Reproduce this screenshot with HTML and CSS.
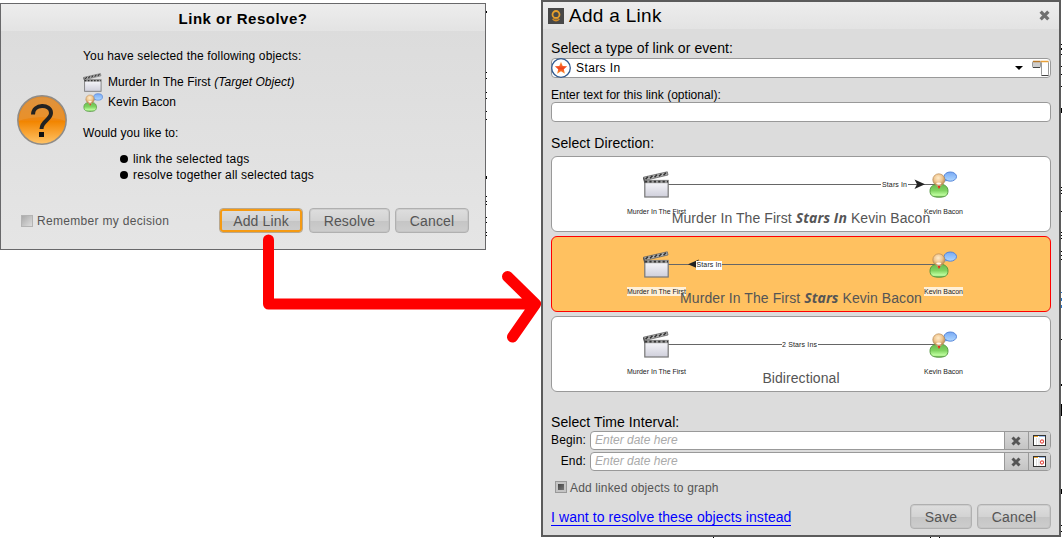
FILE: index.html
```html
<!DOCTYPE html>
<html lang="en">
<head>
<meta charset="utf-8">
<title>Link or Resolve</title>
<link rel="stylesheet" href="styles.css">
</head>
<body>
<svg class="defs" width="0" height="0" aria-hidden="true">
  <defs>
    <linearGradient id="gPaper" x1="0" y1="0" x2="0" y2="1"><stop offset="0" stop-color="#fafafd"/><stop offset="1" stop-color="#cfcfdb"/></linearGradient>
    <radialGradient id="gHead" cx=".45" cy=".35" r=".7"><stop offset="0" stop-color="#ffecca"/><stop offset=".5" stop-color="#f0c690"/><stop offset="1" stop-color="#ad7c40"/></radialGradient>
    <linearGradient id="gBody" x1="0" y1="0" x2="0" y2="1"><stop offset="0" stop-color="#6cb850"/><stop offset=".5" stop-color="#80d460"/><stop offset=".85" stop-color="#c0ffa0"/><stop offset="1" stop-color="#5ea845"/></linearGradient>
    <linearGradient id="gTalk" x1="0" y1="0" x2="0" y2="1"><stop offset="0" stop-color="#78a9f4"/><stop offset="1" stop-color="#b0d8ff"/></linearGradient>
    <linearGradient id="gStar" x1="0" y1="0" x2="0" y2="1"><stop offset="0" stop-color="#ffa040"/><stop offset=".55" stop-color="#f0401c"/><stop offset="1" stop-color="#ff9a30"/></linearGradient>
    <linearGradient id="gQ" x1="0" y1="0" x2="0" y2="1"><stop offset="0" stop-color="#d98a35"/><stop offset=".5" stop-color="#ee860f"/><stop offset=".53" stop-color="#f28500"/><stop offset="1" stop-color="#ffc468"/></linearGradient>
    <symbol id="clapper" viewBox="0 0 26 27">
      <path d="M0.5 6.2 24.3.8 25 4 1.3 9.6Z" fill="#b4b4b4" stroke="#666" stroke-width=".8"/>
      <path d="M2.5 8.2 5 5.7M7 7.2 9.5 4.7M11.5 6.2 14 3.7M16 5.2 18.5 2.7M20.5 4.2 23 1.7" stroke="#333" stroke-width="1.5"/>
      <rect x="1.8" y="9.5" width="23.4" height="16.5" fill="url(#gPaper)" stroke="#777" stroke-width="1.2"/>
      <path d="M1.5 10.8H25.5" stroke="#999" stroke-width="2.8"/>
      <path d="M2 10.7H25" stroke="#333" stroke-width="1.8" stroke-dasharray="2.2 2.2"/>
      <path d="M0.5 6.5 2 12" stroke="#555" stroke-width="1.3"/>
    </symbol>
    <symbol id="person" viewBox="0 0 28 27">
      <path d="M1 20C1 15 5 13 10 13S19 15 19 20C19 25 15.500 26.200 10 26.200S1 25 1 20Z" fill="url(#gBody)" stroke="#4f943b" stroke-width=".9"/>
      <path d="M7 13.500 9.800 17 13 13.500Z" fill="#fff"/><path d="M8.300 14.900H11.700L10 18Z" fill="#e02414"/>
      <path d="M16.500 7 14.800 10.800 20 9.600Z" fill="#6d9fe8"/>
      <ellipse cx="21.300" cy="5.600" rx="6.200" ry="4.600" fill="url(#gTalk)" stroke="#5585d8"/>
      <circle cx="9.800" cy="8.800" r="6" fill="url(#gHead)" stroke="#b98d58" stroke-width=".7"/>
      <ellipse cx="9.800" cy="12.600" rx="2.600" ry="1.100" fill="#fff8ee"/>
    </symbol>
    <symbol id="cross" viewBox="0 0 10 10"><path d="M1.500 1.500 8.500 8.500M8.500 1.500 1.500 8.500" stroke="currentColor" stroke-width="3"/></symbol>
    <symbol id="calendar" viewBox="0 0 13 11">
      <rect x=".5" y=".5" width="12" height="10" fill="#fff" stroke="#333"/>
      <path d="M1 1.500H5" stroke="#f1a52b"/><path d="M6 1.500H12" stroke="#9dbbe8"/>
      <path d="M3.500 3V10M6 3V10" stroke="#ddd"/>
      <circle cx="9" cy="6.500" r="1.600" fill="none" stroke="#e55048" stroke-width="1.100"/>
    </symbol>
  </defs>
</svg>

<svg class="layer" width="1062" height="538" shape-rendering="crispEdges" aria-hidden="true">
  <path d="M486.500 11v2M486.500 72v1M486.500 78v1M486.500 92v1M486.500 98v1M486.500 111v1M486.500 119v1M486.500 176v3M486.500 196v1M486.500 201v1M486.500 204v1M486.500 217v1M486.500 222v1M486.500 232v1M486.500 235v1" stroke="#000"/>
  <path d="M1061.500 44v1M1061.500 48v2M1061.500 54v1M1061.500 66v1M1061.500 74v1M1061.500 86v1M1061.500 108v5M1061.500 187v1M1061.500 190v1M1061.500 193v1M1061.500 211v1M1061.500 232v1M1061.500 235v1M1061.500 238v1M1061.500 251v1M1061.500 255v1M1061.500 259v1M1061.500 339v1M1061.500 384v2M1061.500 404v12M1061.500 489v5M1061.500 525v1M1061.500 531v1M713.500 537v1M930.500 537v1M939.500 537v1" stroke="#000"/>
  <path d="M1061.500 292v1M1061.500 298v3M1061.500 305v3" stroke="#2a73c4"/>
</svg>

<section class="window ask">
  <header class="ask-title"><span class="t-ask">Link or Resolve?</span></header>
  <div class="ask-body">
    <svg class="question" width="50" height="50" viewBox="0 0 50 50">
      <circle cx="25" cy="25" r="24.200" fill="url(#gQ)" stroke="#8f8c88" stroke-width="1.500"/>
      <path d="M2 26C14 21 36 21 48 26 47 10 37 2.500 25 2.500S3 10 2 26Z" fill="#e4a050" opacity=".4"/>
      <path d="M16 19.500C16 8.500 34 8.500 34 18 34 25 24.500 25.500 24.500 34" fill="none" stroke="#222" stroke-width="4"/>
      <rect x="22" y="37" width="5" height="5" fill="#111"/>
    </svg>
    <div class="ask-text">
      <p class="line t-you">You have selected the following objects:</p>
      <div class="objects">
        <div class="object"><svg width="19" height="19"><use href="#clapper"/></svg><span class="t-murder">Murder In The First <i>(Target Object)</i></span></div>
        <div class="object"><svg width="20" height="19"><use href="#person"/></svg><span class="t-kevin">Kevin Bacon</span></div>
      </div>
      <p class="line t-would">Would you like to:</p>
      <ul class="choices">
        <li><span class="t-link">link the selected tags</span></li>
        <li><span class="t-resolve">resolve together all selected tags</span></li>
      </ul>
    </div>
  </div>
  <footer class="ask-foot">
    <span class="check"></span><span class="t-remember">Remember my decision</span>
    <div class="buttons">
      <button class="btn btn-add"><span class="t-btn">Add Link</span></button>
      <button class="btn btn-resolve"><span class="t-btn">Resolve</span></button>
      <button class="btn btn-cancel"><span class="t-btn">Cancel</span></button>
    </div>
  </footer>
</section>

<svg class="layer" width="1062" height="538" aria-hidden="true">
  <path d="M268.500 240V304H535M507.500 276.500 535.500 304 512.500 337" fill="none" stroke="#f00" stroke-width="11" stroke-linecap="round" stroke-linejoin="round"/>
</svg>

<section class="window link">
  <header class="link-title">
    <svg width="16" height="16" viewBox="0 0 16 16"><rect width="16" height="16" fill="#484848"/><circle cx="8" cy="6.500" r="3.500" fill="none" stroke="#e8a02c" stroke-width="1.800"/><path d="M4.500 11Q8 14.500 11.500 11M5.500 10Q8 12 10.500 10" fill="none" stroke="#d08b28" stroke-width="1.200"/></svg>
    <span class="t-add">Add a Link</span>
    <svg class="close" width="11" height="11"><use href="#cross"/></svg>
  </header>
  <div class="link-body">
    <label class="big-label t-type">Select a type of link or event:</label>
    <div class="select">
      <svg width="20" height="20" viewBox="0 0 20 20"><circle cx="10" cy="10" r="9.300" fill="#fff" stroke="#315a90" stroke-width="1.300"/><path d="M10 3.800 11.700 8 16.200 8.300 12.800 11.200 13.900 15.700 10 13.200 6.100 15.700 7.200 11.200 3.800 8.300 8.300 8Z" fill="url(#gStar)"/></svg>
      <span class="t-stars">Stars In</span>
      <svg class="caret" width="8" height="4"><path d="M0 0H8L4 4Z" fill="#000"/></svg>
      <svg class="tree" width="18" height="17" viewBox="0 0 18 17"><rect x=".5" y="1.500" width="8" height="6" rx="1" fill="#ccc" stroke="#999"/><rect x="9.500" y="1.500" width="7" height="14" rx="1" fill="#fff" stroke="#999"/><path d="M1 1.500H8.500" stroke="#b87828" stroke-width="1.500"/><path d="M9 1.500H16.500" stroke="#e8a038" stroke-width="1.500"/><path d="M1 7.500H8M9.500 15.500H16.500" stroke="#444"/></svg>
    </div>
    <label class="small-label t-enter">Enter text for this link (optional):</label>
    <div class="text-input"></div>
    <label class="big-label direction t-dir">Select Direction:</label>
    <div class="cards">
      <div class="card">
        <svg class="diagram" width="498" height="74" viewBox="1 1 498 74">
          <path d="M117 28.500H330M357 28.500H386" stroke="#666"/>
          <use href="#clapper" x="92" y="15" width="26" height="27"/><use href="#person" x="378" y="15" width="28" height="27"/>
          <path d="M363.500 23.500 374 28.300 363.500 33 366 28.300Z" fill="#222"/>
          <text x="331" y="31" textLength="25">Stars In</text>
          <text x="76" y="58" textLength="59">Murder In The First</text><text x="373" y="58" textLength="39">Kevin Bacon</text>
        </svg>
        <p class="caption t-cap1">Murder In The First <b>Stars In</b> Kevin Bacon</p>
      </div>
      <div class="card active">
        <svg class="diagram" width="498" height="74" viewBox="1 1 498 74">
          <path d="M117 28.500H386" stroke="#666"/>
          <use href="#clapper" x="92" y="15" width="26" height="27"/><use href="#person" x="378" y="15" width="28" height="27"/>
          <path d="M148 23.500 137 28.300 148 33 145.500 28.300Z" fill="#222"/>
          <rect x="145" y="25" width="26" height="9" fill="#fff"/><text x="145.500" y="31" textLength="25">Stars In</text>
          <path d="M76 51h59v9H76zM373 51h39v9h-39z" fill="#fff0d8"/>
          <text x="76" y="58" textLength="59">Murder In The First</text><text x="373" y="58" textLength="39">Kevin Bacon</text>
        </svg>
        <p class="caption t-cap2">Murder In The First <b>Stars</b> Kevin Bacon</p>
      </div>
      <div class="card">
        <svg class="diagram" width="498" height="74" viewBox="1 1 498 74">
          <path d="M117 28.500H231M267 28.500H386" stroke="#666"/>
          <use href="#clapper" x="92" y="15" width="26" height="27"/><use href="#person" x="378" y="15" width="28" height="27"/>
          <text x="231" y="31" textLength="35">2 Stars Ins</text>
          <text x="76" y="58" textLength="59">Murder In The First</text><text x="373" y="58" textLength="39">Kevin Bacon</text>
        </svg>
        <p class="caption t-cap3">Bidirectional</p>
      </div>
    </div>
    <label class="big-label interval t-int">Select Time Interval:</label>
    <div class="date-row"><label class="t-date">Begin:</label><div class="date"><span class="placeholder">Enter date here</span><span class="cell"><svg width="10" height="10"><use href="#cross"/></svg></span><span class="cell"><svg width="13" height="11"><use href="#calendar"/></svg></span></div></div>
    <div class="date-row"><label class="t-date">End:</label><div class="date"><span class="placeholder">Enter date here</span><span class="cell"><svg width="10" height="10"><use href="#cross"/></svg></span><span class="cell"><svg width="13" height="11"><use href="#calendar"/></svg></span></div></div>
    <div class="graph-row"><span class="check on"></span><span class="t-graph">Add linked objects to graph</span></div>
    <footer class="link-foot">
      <a class="t-want">I want to resolve these objects instead</a>
      <div class="buttons">
        <button class="btn btn-save"><span class="t-btn">Save</span></button>
        <button class="btn btn-cancel"><span class="t-btn">Cancel</span></button>
      </div>
    </footer>
  </div>
</section>
</body>
</html>
```
FILE: styles.css
```css
* { box-sizing: border-box; }
body { margin: 0; width: 1062px; height: 538px; position: relative; overflow: hidden; background: #fff; font: 12px/16px "Liberation Sans", Arial, sans-serif; color: #000; }
p, ul { margin: 0; padding: 0; }
span, label, a, p { white-space: nowrap; }
svg { display: block; flex: none; }
.defs { position: absolute; }
.layer { position: absolute; left: 0; top: 0; }
.window { position: absolute; display: flex; flex-direction: column; }

.ask { left: 0; top: 3px; width: 486px; height: 247px; border: 1px solid #68686a; background: linear-gradient(#dbdbdb, #e5e5e5); }
.ask-title { height: 27px; background: linear-gradient(#ededed, #e3e3e3); display: flex; justify-content: center; align-items: center; font-weight: bold; font-size: 15px; letter-spacing: .5px; padding-top: 2px; }
.ask-body { display: flex; padding: 17px 0 0 16px; height: 173px; }
.question { margin-top: 47px; }
.ask-text { margin-left: 16px; }
.objects { padding: 8px 0 13px; }
.object { height: 20px; display: grid; grid-template-columns: 25px auto; align-items: center; }
.choices { list-style: none; padding: 10px 0 0 37px; }
.choices li { display: flex; align-items: center; gap: 5px; height: 16px; }
.choices li::before { content: ""; width: 8px; height: 8px; border-radius: 50%; background: #000; }
.t-you { letter-spacing: .15px; }
.t-murder, .t-kevin, .t-would { letter-spacing: .05px; }
.t-link { letter-spacing: .2px; }
.t-resolve { letter-spacing: .16px; }
.t-remember { letter-spacing: .31px; }
.ask-foot { display: flex; align-items: center; height: 25px; padding: 0 16px 0 20px; margin-top: 4px; color: #555; }
.check { width: 12px; height: 12px; margin-right: 4px; border: 1px solid #b4b4b4; background: linear-gradient(135deg, #aaa, #ddd); }
.check.on { border: 1px solid #999; background: linear-gradient(135deg, #444, #777) center / 6px 6px no-repeat, #c4c4c4; }
.buttons { display: flex; gap: 5px; margin-left: auto; }
.btn { height: 25px; padding: 1px 0 0; border: 1px solid #b0b0b0; border-radius: 4px; background: linear-gradient(#dedede, #d3d3d3 50%, #c5c5c5 52%, #cdcdcd); color: #555; font: 14px/20px "Liberation Sans", Arial, sans-serif; letter-spacing: .15px; box-shadow: inset 0 0 0 1px rgba(190,190,190,.5); }
.btn-add { width: 84px; margin-right: 1px; border-color: #b8a890; box-shadow: inset 0 0 0 2px #f59a13; }
.btn-resolve { width: 81px; }
.btn-cancel { width: 74px; }
.btn-save { width: 62px; }

.link { left: 541px; top: 0; width: 520px; height: 537px; border: 2px solid #5b5b5b; background: #dcdcdc; }
.link-title { height: 27px; background: linear-gradient(#ededed, #e3e3e3); display: flex; align-items: center; padding: 0 9px 0 5px; }
.link-title .t-add { margin-left: 5px; font-size: 19px; letter-spacing: .3px; line-height: 26px; }
.close { margin-left: auto; color: #707070; }
.link-body { padding: 10px 8px 0; display: flex; flex-direction: column; }
.big-label { font-size: 14px; letter-spacing: .07px; line-height: 19px; height: 19px; }
.small-label { margin-top: 8px; height: 16px; line-height: 18px; letter-spacing: .03px; }
.select { height: 20px; border: 1px solid #999; border-radius: 4px; background: #fff; display: flex; align-items: center; }
.select > svg:first-child { margin-left: -1px; }
.t-stars { margin-left: 5px; letter-spacing: .4px; }
.caret { margin-left: auto; }
.tree { margin-left: 9px; }
.text-input { height: 20px; border: 1px solid #999; border-radius: 4px; background: #fff; }
.direction { margin-top: 12px; }
.cards { display: grid; grid-template-rows: repeat(3, 76px); gap: 4px; margin-top: 3px; }
.card { border: 1px solid #999; border-radius: 6px; background: #fff; display: grid; }
.card.active { border-color: #f00; background: #ffc160; }
.diagram, .caption { grid-area: 1 / 1; }
.diagram text { font: 7px "Liberation Sans", Arial, sans-serif; fill: #222; }
.caption { justify-self: center; align-self: end; margin-bottom: 4px; font-size: 14px; letter-spacing: .07px; line-height: 18px; color: #555; z-index: 1; }
.caption b { font-family: "Open Sans", "Noto Sans", sans-serif; font-style: italic; font-weight: 700; line-height: 16px; }
.interval { margin-top: 21px; }
.date-row { display: grid; grid-template-columns: 36px 461px; gap: 3px; height: 19px; margin-bottom: 2px; text-align: right; line-height: 19px; }
.t-date { padding-right: 1px; letter-spacing: .15px; }
.interval + .date-row { margin-top: -1px; }
.date { display: grid; grid-template-columns: 413px 24px 22px; border: 1px solid #999; border-radius: 4px; background: #fff; line-height: 17px; overflow: hidden; text-align: left; }
.placeholder { padding-left: 4px; color: #aaa; font-style: italic; }
.cell { display: flex; align-items: center; justify-content: center; padding-right: 1px; border-left: 1px solid #999; color: #555; background: linear-gradient(#d6d6d6, #cecece 50%, #c4c4c4); }
.graph-row { display: flex; align-items: center; height: 16px; margin: 6px 0 0 4px; color: #555; }
.graph-row .check { margin-right: 3px; }
.t-graph { letter-spacing: .14px; line-height: 18px; margin-top: 2px; }
.link-foot { display: flex; align-items: center; margin-top: 9px; }
.t-want { color: #00f; border-bottom: 1px solid #00f; font-size: 14px; letter-spacing: .08px; line-height: 15px; margin-top: 2px; }
```
